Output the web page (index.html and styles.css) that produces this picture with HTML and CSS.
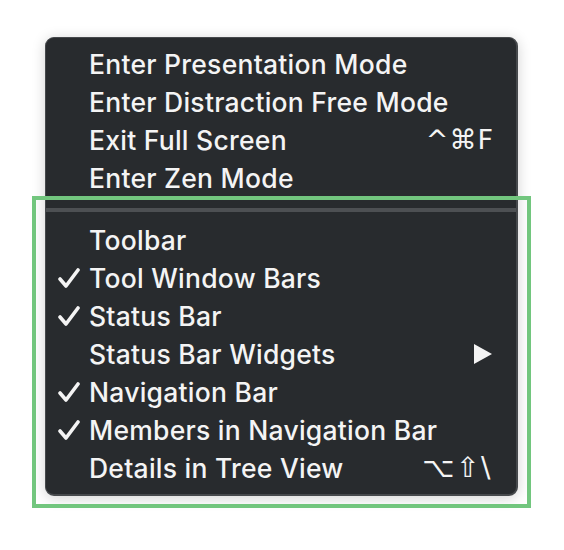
FILE: index.html
```html
<!DOCTYPE html>
<html lang="en">
<head>
  <meta charset="UTF-8">
  <title>View menu</title>
  <link rel="stylesheet" href="styles.css">
</head>
<body>
  <div class="stage">
    <div class="menu">
      <div class="item"><span class="check"></span><span class="label">Enter Presentation Mode</span></div>
      <div class="item"><span class="check"></span><span class="label">Enter Distraction Free Mode</span></div>
      <div class="item"><span class="check"></span><span class="label">Exit Full Screen</span><span class="keys">^⌘F</span></div>
      <div class="item"><span class="check"></span><span class="label">Enter Zen Mode</span></div>
      <div class="sep"></div>
      <div class="item"><span class="check"></span><span class="label">Toolbar</span></div>
      <div class="item"><span class="check"><svg viewBox="0 0 22 20"><polyline points="2,11 8,18 20,2"/></svg></span><span class="label">Tool Window Bars</span></div>
      <div class="item"><span class="check"><svg viewBox="0 0 22 20"><polyline points="2,11 8,18 20,2"/></svg></span><span class="label">Status Bar</span></div>
      <div class="item"><span class="check"></span><span class="label">Status Bar Widgets</span><span class="arrow"></span></div>
      <div class="item"><span class="check"><svg viewBox="0 0 22 20"><polyline points="2,11 8,18 20,2"/></svg></span><span class="label">Navigation Bar</span></div>
      <div class="item"><span class="check"><svg viewBox="0 0 22 20"><polyline points="2,11 8,18 20,2"/></svg></span><span class="label">Members in Navigation Bar</span></div>
      <div class="item"><span class="check"></span><span class="label">Details in Tree View</span><span class="keys wide">⌥⇧\</span></div>
    </div>
    <!-- highlight box drawn over the lower group -->
    <div class="highlight"></div>
  </div>
</body>
</html>
```

FILE: styles.css
```css
* {
  margin: 0;
  padding: 0;
  box-sizing: border-box;
}
body {
  background: #fff;
  font-family: Inter, "Noto Sans", "DejaVu Sans", sans-serif;
}
.stage {
  position: relative;
  width: 564px;
  height: 550px;
  padding: 37px 0 0 45px;
}
.menu {
  width: 473px;
  height: 459px;
  background: #282b2e;
  border: 1px solid #46494c;
  border-right-width: 2px;
  border-bottom-width: 2px;
  border-radius: 9px;
  box-shadow: 0 2px 14px rgba(0, 0, 0, 0.18);
  padding: 7px 22px 0 12px;
  color: #f4f4f4;
}
.item {
  display: flex;
  align-items: center;
  height: 38px;
  font-size: 26.5px;
  font-weight: 500;
  letter-spacing: 0.25px;
  line-height: 38px;
}
.check {
  width: 31px;
  flex: none;
  display: flex;
  align-items: center;
}
.check svg {
  width: 22px;
  height: 20px;
  fill: none;
  stroke: #f4f4f4;
  stroke-width: 3.6;
  stroke-linecap: round;
  stroke-linejoin: round;
}
.label {
  flex: 1;
  white-space: nowrap;
}
.keys {
  font-family: "DejaVu Sans", sans-serif;
  font-size: 27px;
  letter-spacing: 1px;
}
.keys.wide {
  font-size: 28px;
  letter-spacing: 1.5px;
  margin-right: 2px;
}
.arrow {
  width: 0;
  height: 0;
  border-top: 10px solid transparent;
  border-bottom: 10px solid transparent;
  border-left: 18px solid #f4f4f4;
  margin-right: 2px;
}
.sep {
  height: 4px;
  margin: 11px -22px 9px -12px;
  background: #4d5053;
}
.highlight {
  position: absolute;
  left: 32px;
  top: 196px;
  width: 499px;
  height: 312px;
  border: 4px solid #72c67e;
}
```
